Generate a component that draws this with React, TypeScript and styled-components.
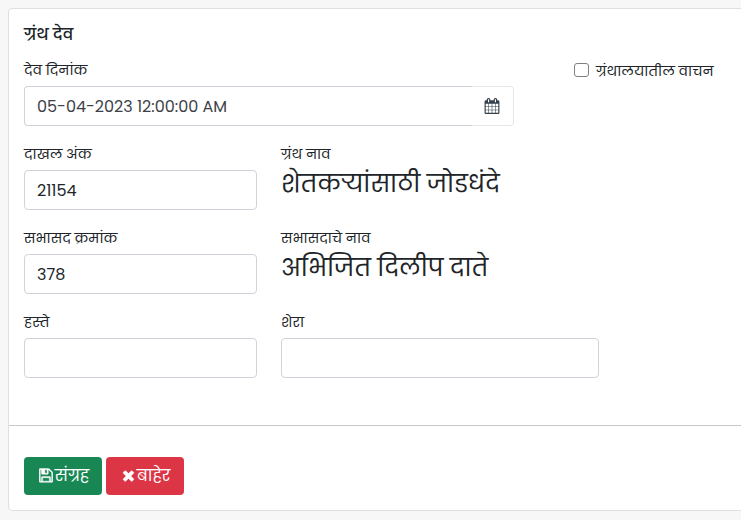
import React, { useState } from "react";
import styled, { createGlobalStyle } from "styled-components";

const GlobalStyle = createGlobalStyle`
  *, *::before, *::after { box-sizing: border-box; }
  body {
    margin: 0;
    background: #f7f7f7;
    color: #212529;
    font-family: Poppins, "Noto Sans", sans-serif;
    font-size: 16px;
    line-height: 24px;
    overflow: hidden;
  }
`;

const Page = styled.main`
  height: 520px;
  padding: 8px 0 9px 8px;
  overflow: hidden;
`;

const Card = styled.form`
  display: flex;
  flex-direction: column;
  width: 760px;
  height: 503px;
  background: #fff;
  border: 1px solid #dfdfdf;
  border-radius: 4px;
`;

const Body = styled.div`
  display: flex;
  flex-direction: column;
  height: 416px;
  padding: 14px 15px 0;
`;

const Title = styled.h1`
  margin: 0 0 13px;
  font-size: 16px;
  font-weight: 500;
  line-height: 24px;
`;

const Row = styled.div`
  display: flex;
  align-items: flex-start;
  gap: 24px;
  height: 84px;
`;

const Field = styled.div<{ $width: number }>`
  display: flex;
  flex-direction: column;
  flex: none;
  width: ${(p) => p.$width}px;
`;

const Label = styled.label`
  height: 26px;
  font-size: 14px;
  line-height: 21px;
`;

const Input = styled.input`
  width: 100%;
  height: 40px;
  padding: 6px 12px;
  border: 1px solid #ced4da;
  border-radius: 4px;
  background: #fff;
  color: #212529;
  font: inherit;
  outline: none;
`;

const InputGroup = styled.div`
  display: flex;
`;

const DateInput = styled(Input)`
  flex: 1;
  border-right: 0;
  border-radius: 4px 0 0 4px;
  color: #3c4147;
`;

const PickerButton = styled.button`
  display: flex;
  align-items: center;
  justify-content: center;
  width: 42px;
  height: 40px;
  padding: 0 2px 0 0;
  border: 1px solid #e4e7ea;
  border-left: 0;
  border-radius: 0 4px 4px 0;
  background: #fff;
  color: #34404c;
`;

const NameText = styled.div`
  margin-top: -4px;
  font-size: 24px;
  line-height: 36px;
  white-space: nowrap;
`;

const CheckLabel = styled.label`
  display: flex;
  align-items: center;
  gap: 7px;
  margin-left: 36px;
  font-size: 14px;
  line-height: 22px;
`;

const Checkbox = styled.input`
  appearance: none;
  width: 15px;
  height: 14px;
  margin: 0 0 2px;
  border: 1px solid #808080;
  border-radius: 3px;
  background: #fff;
`;

const Footer = styled.footer`
  display: flex;
  gap: 4px;
  padding: 31px 15px 0;
  border-top: 1px solid #c8c8c8;
`;

const Button = styled.button<{ $color: string }>`
  display: flex;
  align-items: center;
  justify-content: center;
  gap: 2px;
  width: 78px;
  height: 38px;
  padding: 0 0 0 2px;
  border: 0;
  border-radius: 4px;
  background: ${(p) => p.$color};
  color: #fff;
  font: inherit;
`;

const Glyph = styled.svg<{ $w: number; $bold?: number }>`
  flex: none;
  width: ${(p) => p.$w}px;
  height: 16px;
  fill: currentColor;
  stroke: currentColor;
  stroke-width: ${(p) => p.$bold ?? 0};
`;

const CalendarIcon = () => (
  <Glyph $w={16} viewBox="0 0 1792 1792">
    <path d="M192 1664h288v-288h-288v288zm352 0h320v-288h-320v288zm-352-352h288v-320h-288v320zm352 0h320v-320h-320v320zm-352-384h288v-288h-288v288zm736 736h320v-288h-320v288zm-384-736h320v-288h-320v288zm768 736h288v-288h-288v288zm-384-352h320v-320h-320v320zm-352-864v-288q0-13-9.5-22.5t-22.5-9.5h-64q-13 0-22.5 9.5t-9.5 22.5v288q0 13 9.5 22.5t22.5 9.5h64q13 0 22.5-9.5t9.5-22.5zm736 864h288v-320h-288v320zm-384-384h320v-288h-320v288zm384 0h288v-288h-288v288zm32-480v-288q0-13-9.5-22.5t-22.5-9.5h-64q-13 0-22.5 9.5t-9.5 22.5v288q0 13 9.5 22.5t22.5 9.5h64q13 0 22.5-9.5t9.5-22.5zm384-64v1280q0 52-38 90t-90 38h-1408q-52 0-90-38t-38-90v-1280q0-52 38-90t90-38h128v-96q0-66 47-113t113-47h64q66 0 113 47t47 113v96h384v-96q0-66 47-113t113-47h64q66 0 113 47t47 113v96h128q52 0 90 38t38 90z" />
  </Glyph>
);

const SaveIcon = () => (
  <Glyph $w={14} $bold={50} viewBox="112 60 1568 1792">
    <path d="M512 1536h768v-384h-768v384zm896 0h128v-896q0-14-10-38.5t-20-34.5l-281-281q-10-10-34-20t-39-10v416q0 40-28 68t-68 28h-576q-40 0-68-28t-28-68v-416h-128v1280h128v-416q0-40 28-68t68-28h832q40 0 68 28t28 68v416zm-384-928v-320q0-13-9.5-22.5t-22.5-9.5h-192q-13 0-22.5 9.5t-9.5 22.5v320q0 13 9.5 22.5t22.5 9.5h192q13 0 22.5-9.5t9.5-22.5zm640 32v928q0 40-28 68t-68 28h-1344q-40 0-68-28t-28-68v-1344q0-40 28-68t68-28h928q40 0 88 20t76 48l280 280q28 28 48 76t20 88z" />
  </Glyph>
);

const CloseIcon = () => (
  <Glyph $w={13} $bold={50} viewBox="168 60 1456 1792">
    <path d="M1490 1322q0 40-28 68l-136 136q-28 28-68 28t-68-28l-294-294-294 294q-28 28-68 28t-68-28l-136-136q-28-28-28-68t28-68l294-294-294-294q-28-28-28-68t28-68l136-136q28-28 68-28t68 28l294 294 294-294q28-28 68-28t68 28l136 136q28 28 28 68t-28 68l-294 294 294 294q28 28 28 68z" />
  </Glyph>
);

export default function App() {
  const [date, setDate] = useState("05-04-2023 12:00:00 AM");
  const [entryNo, setEntryNo] = useState("21154");
  const [memberNo, setMemberNo] = useState("378");

  return (
    <>
      <GlobalStyle />
      <Page>
        <Card onSubmit={(e) => e.preventDefault()}>
          <Body>
            <Title>ग्रंथ देव</Title>
            <Row>
              <Field $width={490}>
                <Label htmlFor="date">देव दिनांक</Label>
                <InputGroup>
                  <DateInput id="date" value={date} onChange={(e) => setDate(e.target.value)} />
                  <PickerButton type="button">
                    <CalendarIcon />
                  </PickerButton>
                </InputGroup>
              </Field>
              <CheckLabel>
                <Checkbox type="checkbox" />
                ग्रंथालयातील वाचन
              </CheckLabel>
            </Row>
            <Row>
              <Field $width={233}>
                <Label htmlFor="entry">दाखल अंक</Label>
                <Input id="entry" value={entryNo} onChange={(e) => setEntryNo(e.target.value)} />
              </Field>
              <Field $width={318}>
                <Label>ग्रंथ नाव</Label>
                <NameText>शेतकऱ्यांसाठी जोडधंदे</NameText>
              </Field>
            </Row>
            <Row>
              <Field $width={233}>
                <Label htmlFor="member">सभासद क्रमांक</Label>
                <Input id="member" value={memberNo} onChange={(e) => setMemberNo(e.target.value)} />
              </Field>
              <Field $width={318}>
                <Label>सभासदाचे नाव</Label>
                <NameText>अभिजित दिलीप दाते</NameText>
              </Field>
            </Row>
            <Row>
              <Field $width={233}>
                <Label htmlFor="by">हस्ते</Label>
                <Input id="by" />
              </Field>
              <Field $width={318}>
                <Label htmlFor="remark">शेरा</Label>
                <Input id="remark" />
              </Field>
            </Row>
          </Body>
          <Footer>
            <Button type="submit" $color="#198754">
              <SaveIcon />
              <span>संग्रह</span>
            </Button>
            <Button type="button" $color="#dc3545">
              <CloseIcon />
              <span>बाहेर</span>
            </Button>
          </Footer>
        </Card>
      </Page>
    </>
  );
}
